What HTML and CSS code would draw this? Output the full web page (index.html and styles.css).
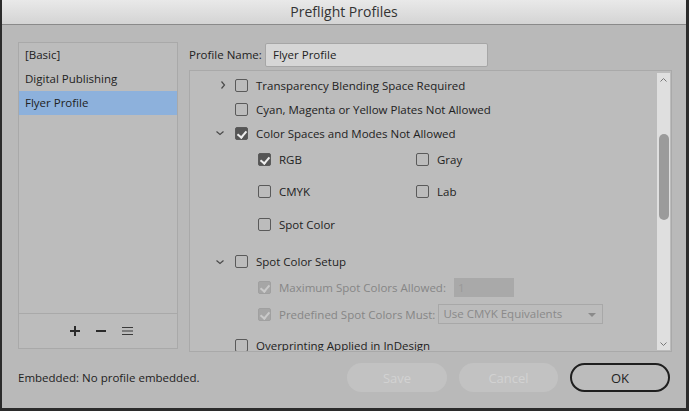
FILE: index.html
```html
<!doctype html>
<html>
<head>
  <title>Preflight Profiles</title>
  <link rel="stylesheet" href="styles.css">
</head>
<body>
  <div class="window">
    <div class="titlebar">Preflight Profiles</div>

    <div class="main">
      <div class="sidebar">
        <ul class="profiles">
          <li>[Basic]</li>
          <li>Digital Publishing</li>
          <li class="selected">Flyer Profile</li>
        </ul>
        <div class="list-tools">
          <svg width="12" height="12" viewBox="0 0 12 12"><path d="M6 1v10M1 6h10" stroke="#2a2a2a" stroke-width="2"/></svg>
          <svg width="12" height="12" viewBox="0 0 12 12"><path d="M1 6h10" stroke="#2a2a2a" stroke-width="2"/></svg>
          <svg width="13" height="12" viewBox="0 0 13 12"><path d="M1 2.5h11M1 6h11M1 9.5h11" stroke="#3a3a3a" stroke-width="1.2"/></svg>
        </div>
      </div>

      <div class="editor">
        <div class="name-row">
          <label for="profile-name">Profile Name:</label>
          <input id="profile-name" class="name-input" value="Flyer Profile">
        </div>

        <div class="rules">
          <div class="rules-content">
            <div class="row">
              <span class="chev"><svg width="14" height="10" viewBox="0 0 14 10"><path d="M5.5 1.5l3 3.5-3 3.5" fill="none" stroke="#4a4a4a" stroke-width="1.2"/></svg></span>
              <span class="box"></span>
              <span class="label">Transparency Blending Space Required</span>
            </div>
            <div class="row">
              <span class="chev"></span>
              <span class="box"></span>
              <span class="label">Cyan, Magenta or Yellow Plates Not Allowed</span>
            </div>
            <div class="row">
              <span class="chev"><svg width="14" height="10" viewBox="0 0 14 10"><path d="M0.5 3.5l3.5 3 3.5-3" fill="none" stroke="#4a4a4a" stroke-width="1.2"/></svg></span>
              <span class="box checked"></span>
              <span class="label">Color Spaces and Modes Not Allowed</span>
            </div>

            <div class="modes">
              <div class="opt"><span class="box checked"></span><span class="label">RGB</span></div>
              <div class="opt"><span class="box"></span><span class="label">Gray</span></div>
              <div class="opt"><span class="box"></span><span class="label">CMYK</span></div>
              <div class="opt"><span class="box"></span><span class="label">Lab</span></div>
              <div class="opt"><span class="box"></span><span class="label">Spot Color</span></div>
            </div>

            <div class="row spot-head">
              <span class="chev"><svg width="14" height="10" viewBox="0 0 14 10"><path d="M0.5 3.5l3.5 3 3.5-3" fill="none" stroke="#4a4a4a" stroke-width="1.2"/></svg></span>
              <span class="box"></span>
              <span class="label">Spot Color Setup</span>
            </div>
            <div class="opt setting">
              <span class="box checked disabled"></span>
              <span class="label muted">Maximum Spot Colors Allowed:</span>
              <span class="num-field">1</span>
            </div>
            <div class="opt setting">
              <span class="box checked disabled"></span>
              <span class="label muted">Predefined Spot Colors Must:</span>
              <span class="select-field">Use CMYK Equivalents<span class="caret"></span></span>
            </div>

            <div class="row last">
              <span class="chev"></span>
              <span class="box"></span>
              <span class="label">Overprinting Applied in InDesign</span>
            </div>
          </div>
          <div class="scrollbar">
            <svg class="arrow" width="13" height="8" viewBox="0 0 13 8"><path d="M3.5 5.5l3-3 3 3" fill="none" stroke="#777" stroke-width="1"/></svg>
            <div class="thumb"></div>
            <svg class="arrow down" width="13" height="8" viewBox="0 0 13 8"><path d="M3.5 2.5l3 3 3-3" fill="none" stroke="#777" stroke-width="1"/></svg>
          </div>
        </div>
      </div>
    </div>

    <div class="footer">
      <span class="embedded">Embedded: No profile embedded.</span>
      <button class="btn disabled">Save</button>
      <button class="btn disabled">Cancel</button>
      <button class="btn primary">OK</button>
    </div>
  </div>
</body>
</html>
```

FILE: styles.css
```css
body { margin: 0; background: #2b2b2b; font-family: "Open Sans", "Liberation Sans", sans-serif; font-size: 11.5px; color: #222; }
.window { height: 408px; margin: 0 3px 0 2px; background: #b9b9b9; display: flex; flex-direction: column; }

.titlebar { height: 24px; border-bottom: 1px solid #8a8a8a; background: linear-gradient(#e9e9e9, #d4d4d4); text-align: center; line-height: 24px; font-size: 14px; color: #333; }

.main { display: flex; gap: 11px; padding: 17px 14px 0 16px; height: 310px; }

.sidebar { width: 160px; display: flex; flex-direction: column; }
.profiles { list-style: none; margin: 0; padding: 0; height: 270px; border: 1px solid #a9a9a9; border-bottom: none; background: #bcbcbc; }
.profiles li { height: 24px; line-height: 24px; padding-left: 6px; }
.profiles li.selected { background: #8db1dc; }
.list-tools { height: 34px; border: 1px solid #a9a9a9; background: #bcbcbc; display: flex; align-items: center; justify-content: center; gap: 14px; padding-left: 6px; }

.editor { width: 483px; display: flex; flex-direction: column; }
.name-row { display: flex; align-items: center; height: 25px; }
.name-row label { width: 76px; }
.name-input { width: 223px; height: 24px; box-sizing: border-box; border: 1px solid #a6a6a6; border-radius: 2px; background: #d6d6d6; font: inherit; color: #222; padding: 0 7px; }

.rules { margin-top: 3px; height: 282px; box-sizing: border-box; border: 1px solid #a9a9a9; background: #bcbcbc; display: flex; overflow: hidden; }
.rules-content { flex: 1; padding-top: 2px; overflow: hidden; }

.row { display: flex; align-items: center; height: 24px; padding-left: 26px; }
.chev { width: 14px; height: 10px; display: flex; }
.row .box { margin-left: 5px; }
.box { width: 13px; height: 13px; box-sizing: border-box; border: 1px solid #5a5a5a; border-radius: 2px; flex: none; position: relative; }
.box.checked { background: #555; }
.box.checked::after { content: ""; position: absolute; left: 3px; top: 1px; width: 4px; height: 7px; border: solid #eee; border-width: 0 2px 2px 0; transform: rotate(40deg); }
.box.disabled { background: #a6a6a6; border-color: #a0a0a0; }
.box.disabled::after { border-color: #cacaca; }
.label { margin-left: 8px; white-space: nowrap; }
.muted { color: #868686; }

.modes { display: grid; grid-template-columns: 158px 150px; grid-auto-rows: 32.5px; margin-top: -2px; padding-left: 68px; }
.opt { display: flex; align-items: center; }
.setting { height: 27px; padding-left: 68px; }

.spot-head { margin-top: 9px; }
.num-field { margin-left: 8px; width: 60px; height: 19px; line-height: 19px; background: #a9a9a9; color: #999; padding-left: 4px; box-sizing: border-box; }
.select-field { margin-left: 3px; width: 165px; height: 20px; box-sizing: border-box; border: 1px solid #a8a8a8; color: #8a8a8a; padding-left: 4px; line-height: 18px; position: relative; }
.caret { position: absolute; right: 6px; top: 8px; border-left: 4px solid transparent; border-right: 4px solid transparent; border-top: 4px solid #8a8a8a; }

.row.last { margin-top: 6px; }

.scrollbar { width: 13px; margin: 2px 1px 1px 0; background: #dfdfdf; position: relative; }
.arrow { position: absolute; left: 0; top: 3px; }
.arrow.down { top: auto; bottom: 2px; }
.thumb { position: absolute; left: 2px; top: 61px; width: 10px; height: 86px; border-radius: 5px; background: #9b9b9b; }

.footer { display: flex; align-items: center; padding: 11px 16px 0 16px; }
.embedded { flex: 1; }
.btn { height: 29px; border-radius: 15px; font: inherit; font-size: 13px; margin-left: 12px; }
.btn.disabled { width: 100px; border: none; background: #c2c2c2; color: #d2d2d2; }
.btn.disabled + .btn.disabled { width: 99px; }
.btn.primary { width: 100px; border: 2px solid #1f1f1f; background: #bcbcbc; color: #222; }
```
